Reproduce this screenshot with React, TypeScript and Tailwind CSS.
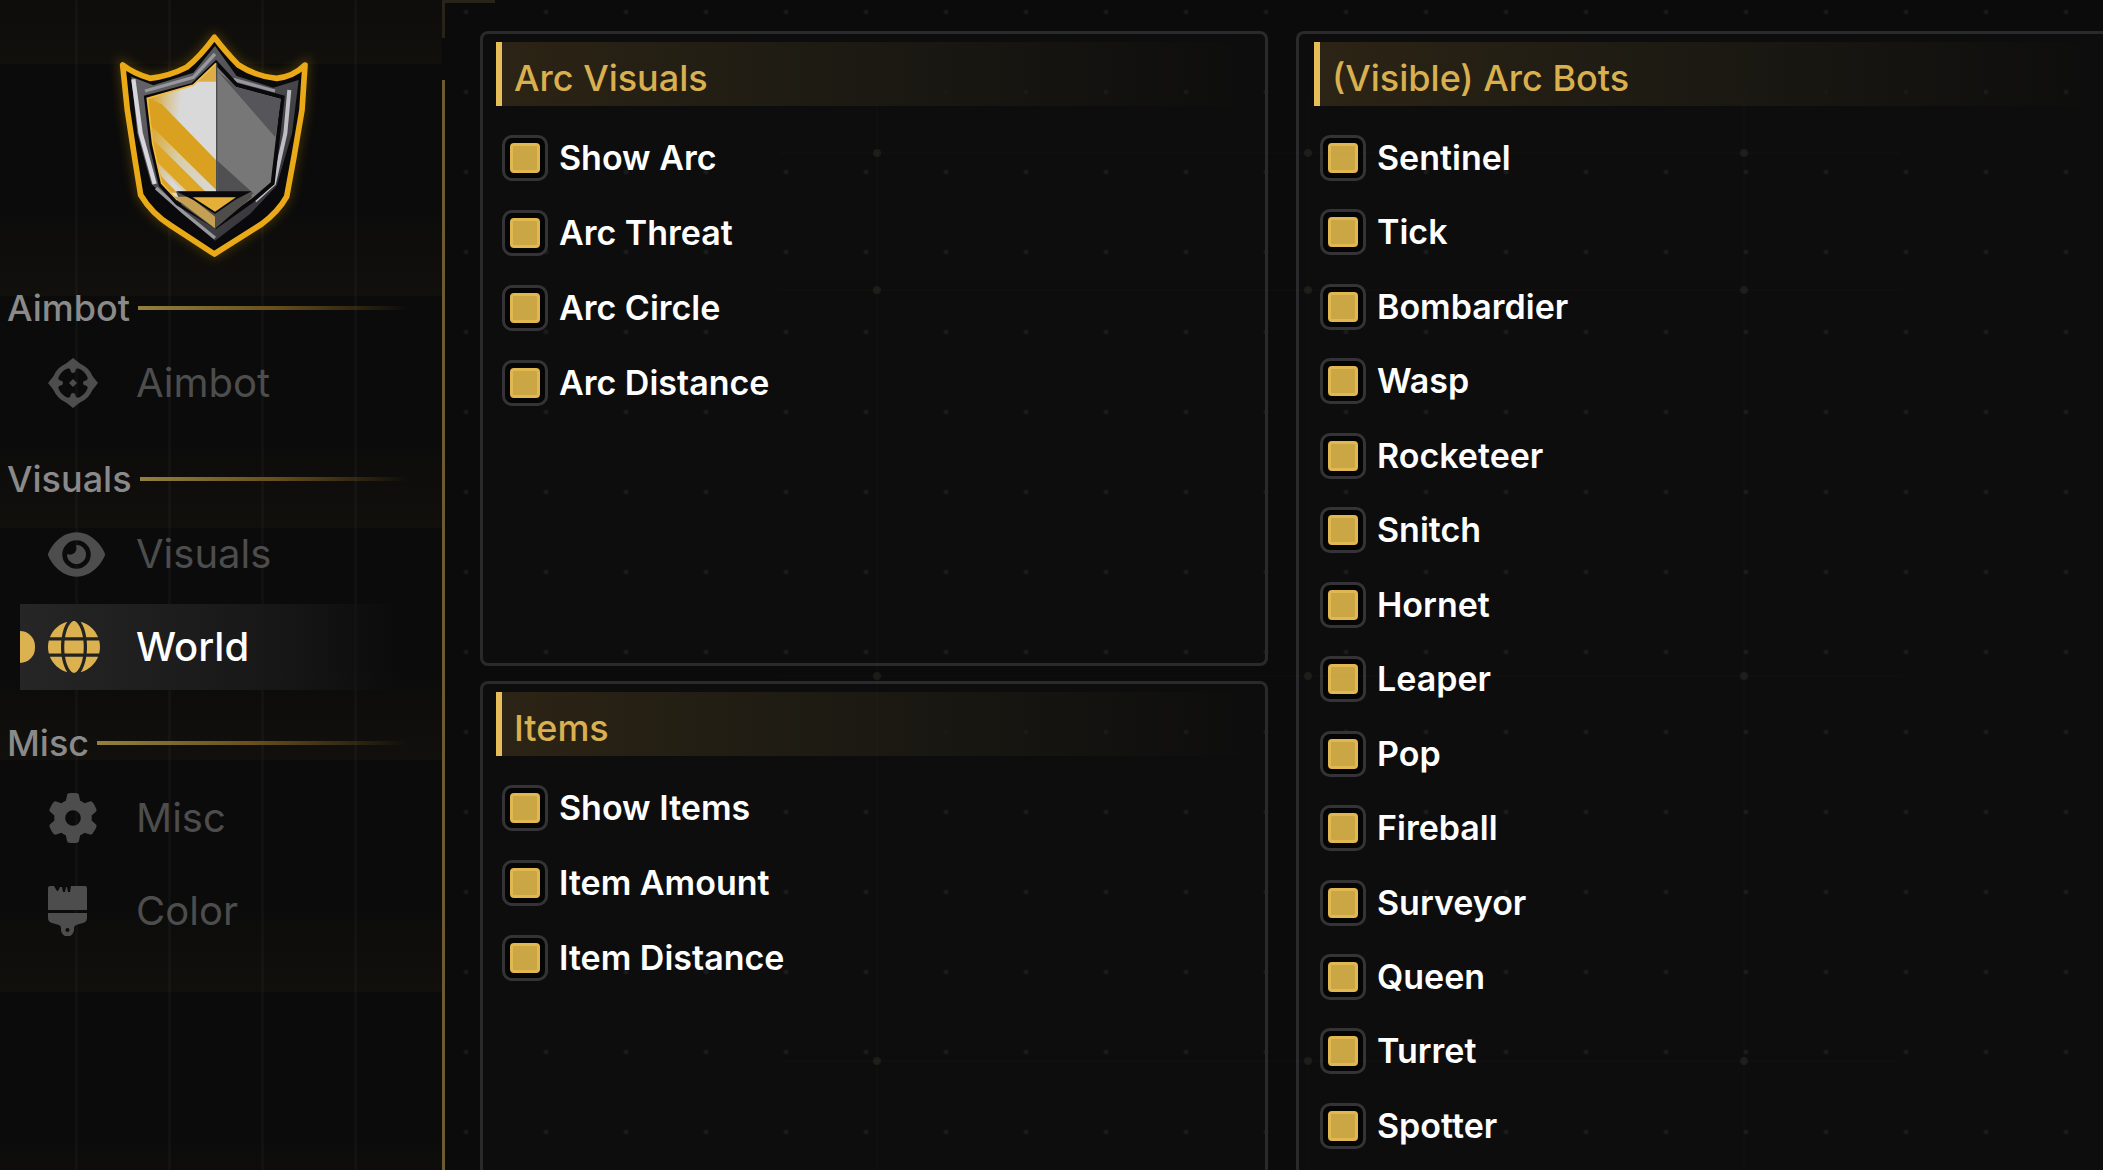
import { useState } from "react";
import type { ReactNode } from "react";
import { FaEye, FaGear, FaGlobe } from "react-icons/fa6";

const arcVisuals = ["Show Arc", "Arc Threat", "Arc Circle", "Arc Distance"];

const items = ["Show Items", "Item Amount", "Item Distance"];

const arcBots = [
  "Sentinel",
  "Tick",
  "Bombardier",
  "Wasp",
  "Rocketeer",
  "Snitch",
  "Hornet",
  "Leaper",
  "Pop",
  "Fireball",
  "Surveyor",
  "Queen",
  "Turret",
  "Spotter",
];

const sections = [
  { title: "Aimbot", tabs: [{ name: "Aimbot", icon: <TargetIcon /> }] },
  {
    title: "Visuals",
    tabs: [
      { name: "Visuals", icon: <FaEye className="h-[51px] w-[57px]" /> },
      { name: "World", icon: <FaGlobe className="size-[52px]" /> },
    ],
  },
  {
    title: "Misc",
    tabs: [
      { name: "Misc", icon: <FaGear className="size-[50px]" /> },
      { name: "Color", icon: <BrushIcon /> },
    ],
  },
];

function TargetIcon() {
  return (
    <svg viewBox="0 0 50 50" className="size-[50px]" fill="currentColor" aria-hidden>
      <circle cx="25" cy="25" r="18" fill="none" stroke="currentColor" strokeWidth="5" />
      <path d="M25 0l10 8-7 3-1 3q-2 2-4 0l-1-3-7-3zM25 50l10-8-7-3-1-3q-2-2-4 0l-1 3-7 3zM0 25l8-10 3 7 3 1q2 2 0 4l-3 1-3 7zM50 25l-8-10-3 7-3 1q-2 2 0 4l3 1 3 7z" />
      <path d="M25 21l4 4-4 4-4-4z" />
    </svg>
  );
}

function BrushIcon() {
  return (
    <svg viewBox="0 0 39 50" className="h-[50px] w-[39px]" fill="currentColor" aria-hidden>
      <path d="M0 24V2q0-2 2-2h4l3 5h1l2-4h2l1 5h2l1-5h1l1 5h2l1-6h14q2 0 2 2v22z" />
      <path
        fillRule="evenodd"
        d="M0 27h39v5q0 4-4 5l-7 2q-2 1-2 3v2a6 6 0 0 1-13 0v-2q0-2-2-3l-7-2q-4-1-4-5zM19 42a2 2 0 1 0 1 0z"
      />
    </svg>
  );
}

function Logo() {
  return (
    <svg viewBox="0 0 750 810" className="ml-[90px] h-[270px] w-[250px]" role="img" aria-label="Shield">
      <defs>
        <linearGradient id="rim" x1="0" y1="0" x2="1" y2="1">
          <stop offset="0" stopColor="#6a6a6e" />
          <stop offset="0.5" stopColor="#4a4a4f" />
          <stop offset="1" stopColor="#2c2c30" />
        </linearGradient>
        <linearGradient id="face" x1="0.1" y1="0.2" x2="0.5" y2="0.3">
          <stop offset="0" stopColor="#dba21d" />
          <stop offset="0.5" stopColor="#d8c08a" />
          <stop offset="1" stopColor="#d9d9d9" />
        </linearGradient>
        <linearGradient id="stripe" x1="0" y1="0" x2="1" y2="0.6">
          <stop offset="0" stopColor="#dba52a" />
          <stop offset="0.45" stopColor="#d8cda9" />
          <stop offset="1" stopColor="#d9d9d9" />
        </linearGradient>
        <filter id="glow" x="-20%" y="-20%" width="140%" height="140%">
          <feGaussianBlur stdDeviation="16" />
        </filter>
        <clipPath id="left">
          <path d="M380 160L308 225 172 265 188 400 215 520 262 570 380 640z" />
        </clipPath>
      </defs>
      <path
        d="M373 82Q330 140 290 172 235 200 180 205 130 190 98 165L112 300 135 450 152 555Q185 610 240 645L373 732 515 642Q565 605 590 560L612 440 636 300 645 165Q610 200 560 205 500 200 445 165 410 130 373 82z"
        fill="none"
        stroke="#b8860b"
        strokeWidth="22"
        opacity="0.4"
        filter="url(#glow)"
      />
      <path
        d="M373 82Q330 140 290 172 235 200 180 205 130 190 98 165L112 300 135 450 152 555Q185 610 240 645L373 732 515 642Q565 605 590 560L612 440 636 300 645 165Q610 200 560 205 500 200 445 165 410 130 373 82z"
        fill="#0a0a0c"
        stroke="#eaaa17"
        strokeWidth="17"
        strokeLinejoin="round"
      />
      <path
        d="M375 108L310 188 190 226 124 200 142 370 184 522 270 604 375 692 480 612 560 527 606 370 626 210 550 233 440 198z"
        fill="url(#rim)"
      />
      <path d="M130 208L152 370 194 522" fill="none" stroke="#d6d6dc" strokeWidth="13" />
      <path d="M598 240L586 370 552 520 495 572" fill="none" stroke="#bdbdc3" strokeWidth="12" />
      <path d="M165 243L310 202 375 132M430 208L555 243M198 534L280 607 375 684" fill="none" stroke="#98989c" strokeWidth="10" />
      <path
        d="M378 158L308 225 168 262 185 410 212 525 262 580 378 650 490 570 548 520 562 400 578 262 440 225z"
        fill="#777"
        stroke="#09090b"
        strokeWidth="12"
      />
      <g clipPath="url(#left)">
        <path d="M160 150H380V650H160z" fill="url(#face)" />
        <path d="M310 215L345 165 380 150V215z" fill="#dcae45" />
        <path d="M160 260L215 282 380 452V542L185 350z" fill="#d9a11f" />
        <path d="M180 345L380 542V650L180 440z" fill="url(#stripe)" />
        <path d="M180 385L205 405 350 548H295L180 435z" fill="#dda624" />
        <path d="M190 450L215 500 262 548H220z" fill="#d8a22c" />
      </g>
      <path d="M378 160L310 225 172 265 188 400 215 520 262 570" fill="none" stroke="#f0bd42" strokeWidth="5" />
      <path d="M382 182L440 232 573 268 556 382z" fill="#56565a" />
      <path d="M382 452L492 552H382z" fill="#505053" />
      <path d="M380 160V545" stroke="#4c4c4c" strokeWidth="4" />
      <path d="M258 545H485V562L375 656 275 585z" fill="#4f4d4a" />
      <path d="M250 560L375 655V620L300 560z" fill="#c5a052" />
      <path d="M258 544H485L435 570 375 612 310 570z" fill="#09090b" />
      <path d="M308 562H438L375 605z" fill="#e5b03a" />
    </svg>
  );
}

// faint crossing lines with a glint on each junction
function Glints() {
  const xs = [877, 1308, 1744];
  const ys = [153, 290, 676, 1061];

  return (
    <svg className="pointer-events-none absolute inset-0 size-full" aria-hidden>
      {xs.map((x) => (
        <path key={x} d={`M${x} 100V1170`} stroke="#fff" strokeOpacity="0.012" strokeWidth="2" />
      ))}
      {ys.map((y) => (
        <path key={y} d={`M780 ${y}H1900`} stroke="#c9a94a" strokeOpacity="0.02" strokeWidth="2" />
      ))}
      {xs.flatMap((x) => ys.map((y) => <circle key={`${x}-${y}`} cx={x} cy={y} r="4" fill="#b3a97f" fillOpacity="0.1" />))}
    </svg>
  );
}

function Toggle({ label }: { label: string }) {
  const [on, setOn] = useState(true);

  return (
    <label className="flex h-12 cursor-pointer items-center gap-[11px] text-[34px] leading-none font-semibold text-white">
      <input
        type="checkbox"
        checked={on}
        onChange={() => setOn(!on)}
        className="grid size-[46px] shrink-0 appearance-none place-content-center rounded-[10px] border-3 border-[#343436] bg-[#050505] before:size-[30px] before:rounded-sm before:border-3 before:border-[#e0b84f] before:bg-[#cba645] before:opacity-0 checked:before:opacity-100"
      />
      {label}
    </label>
  );
}

function Panel({ title, className, children }: { title: string; className: string; children: ReactNode }) {
  return (
    <section className={`flex flex-col border-[#2a2a2c] bg-white/1 pt-2 ${className}`}>
      <h2 className="flex h-16 items-center border-l-6 border-[#e6bd58] bg-linear-to-r from-[#2c2415] via-[#1b1912] to-transparent pt-2 pl-3 text-[36px] leading-none font-medium text-[#d9b050]">
        {title}
      </h2>
      {children}
    </section>
  );
}

export default function App() {
  const [tab, setTab] = useState("World");

  return (
    <div className="relative flex min-h-screen overflow-hidden bg-[#0b0b0b] font-['Inter',sans-serif]">
      <aside className="w-[442px] shrink-0 bg-[linear-gradient(90deg,rgba(255,255,255,0.022)_3px,transparent_3px),linear-gradient(180deg,transparent_60%,rgba(200,150,40,0.03))] bg-size-[93px_100%,100%_232px] bg-position-[75px_0,0_64px] pt-[10px]">
        <Logo />
        <nav className="mt-1 flex flex-col gap-[29px]">
          {sections.map((section) => (
            <div key={section.title}>
              <h3 className="flex h-12 items-center gap-2 pr-[34px] pl-[7px] text-[36px] leading-none font-medium text-[#8a8a8a]">
                {section.title}
                <span className="h-1 flex-1 bg-linear-to-r from-[#94803f] via-[#69501c] to-transparent" />
              </h3>
              <div className="mt-2 flex flex-col gap-[7px] pl-5">
                {section.tabs.map(({ name, icon }) => (
                  <button
                    key={name}
                    type="button"
                    onClick={() => setTab(name)}
                    className={`relative flex h-[86px] items-center pl-7 text-left text-[40px] leading-none ${
                      tab === name
                        ? "bg-linear-to-r from-[#262626] via-[#171717] via-60% to-transparent to-90% font-medium text-white"
                        : "text-[#4d4d4d]"
                    }`}
                  >
                    {tab === name && <span className="absolute left-0 h-8 w-[15px] rounded-r-full bg-[#dcb150]" />}
                    <span className={`w-[88px] shrink-0 ${tab === name ? "text-[#dcb150]" : ""}`}>{icon}</span>
                    {name}
                  </button>
                ))}
              </div>
            </div>
          ))}
        </nav>
      </aside>

      <main className="relative flex-1 bg-[radial-gradient(circle,#181818_2px,transparent_3px)] bg-size-[80px_80px] bg-position-[-16px_-28px]">
        <div className="absolute top-0 left-0 h-[38px] w-[53px] border-t-3 border-l-3 border-[#29241a]" />
        <div className="absolute top-20 bottom-0 left-0 w-[3px] bg-[#6b5a32]" />
        <div className="grid min-h-screen grid-cols-[788fr_807fr] gap-7 pt-[31px] pl-[38px]">
          <div className="flex flex-col gap-[15px]">
            <Panel title="Arc Visuals" className="h-[635px] rounded-lg border-3 px-[13px]">
              <div className="mt-7 flex flex-col gap-[27px] pl-[6px]">
                {arcVisuals.map((label) => (
                  <Toggle key={label} label={label} />
                ))}
              </div>
            </Panel>
            <Panel title="Items" className="flex-1 rounded-t-lg border-3 border-b-0 px-[13px]">
              <div className="mt-7 flex flex-col gap-[27px] pl-[6px]">
                {items.map((label) => (
                  <Toggle key={label} label={label} />
                ))}
              </div>
            </Panel>
          </div>
          <Panel title="(Visible) Arc Bots" className="rounded-tl-lg border-t-3 border-l-3 pl-[15px]">
            <div className="mt-7 flex flex-1 flex-col justify-between pb-5 pl-[6px]">
              {arcBots.map((label) => (
                <Toggle key={label} label={label} />
              ))}
            </div>
          </Panel>
        </div>
      </main>
      <Glints />
    </div>
  );
}
